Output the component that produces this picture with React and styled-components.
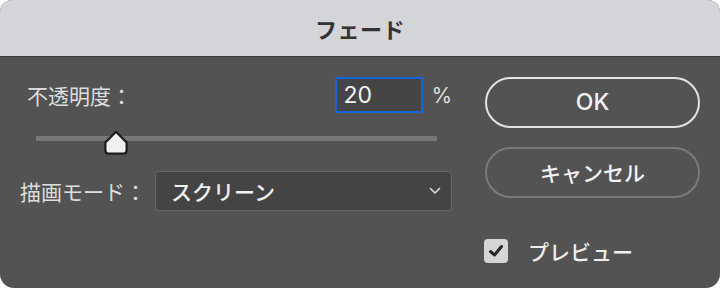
import React, { useState } from 'react';
import styled, { createGlobalStyle } from 'styled-components';

const GlobalStyle = createGlobalStyle`
  html, body {
    margin: 0;
    padding: 0;
    background: #ffffff;
  }
  body {
    font-family: Inter, "Noto Sans CJK JP", sans-serif;
  }
`;

const Window = styled.div`
  width: 720px;
  height: 288px;
  border-radius: 12px 12px 14px 14px;
  overflow: hidden;
  background-color: #535353;
  display: flex;
  flex-direction: column;
`;

const TitleBar = styled.div`
  height: 56px;
  flex-shrink: 0;
  background-color: #d4d5d8;
  border-bottom: 1px solid #3a3a3a;
  display: flex;
  align-items: center;
  justify-content: center;
  font-family: "Noto Sans CJK JP", sans-serif;
  font-size: 22px;
  font-weight: 700;
  color: #333333;
  letter-spacing: 0.5px;
`;

const Body = styled.div`
  flex: 1;
  display: grid;
  grid-template-columns: 432px 215px;
  column-gap: 33px;
  padding: 20px 0 0 20px;
`;

const LeftColumn = styled.div`
  display: flex;
  flex-direction: column;
`;

const OpacityRow = styled.div`
  height: 36px;
  display: flex;
  align-items: center;
  padding-left: 7px;
`;

const Label = styled.span`
  font-family: "Noto Sans CJK JP", sans-serif;
  font-size: 21px;
  color: #dedede;
  white-space: nowrap;
`;

const NumberInput = styled.input`
  margin-left: auto;
  width: 88px;
  height: 36px;
  box-sizing: border-box;
  border: 2px solid #1565d6;
  background-color: #454545;
  color: #f2f2f2;
  font-family: Inter, sans-serif;
  font-size: 23px;
  padding: 0 6px;
  outline: none;
`;

const Unit = styled.span`
  margin-left: 8px;
  font-family: Inter, sans-serif;
  font-size: 21px;
  color: #dedede;
`;

const SliderWrap = styled.div`
  position: relative;
  height: 24px;
  margin: 17px 15px 0 16px;
`;

const Track = styled.div`
  position: absolute;
  left: 0;
  right: 0;
  top: 6px;
  height: 5px;
  background-color: #777777;
`;

const Thumb = styled.svg`
  position: absolute;
  top: 0;
  width: 26px;
  height: 25px;
  margin-left: -13px;
`;

const ModeRow = styled.div`
  margin-top: 17px;
  display: flex;
  align-items: center;
  gap: 9px;
`;

const Select = styled.div`
  flex: 1;
  height: 40px;
  box-sizing: border-box;
  border: 1px solid #686868;
  border-radius: 4px;
  background-color: #444444;
  display: flex;
  align-items: center;
  padding: 0 10px 0 15px;
  font-family: "Noto Sans CJK JP", sans-serif;
  font-size: 21px;
  font-weight: 500;
  color: #f0f0f0;
`;

const SelectText = styled.span`
  flex: 1;
`;

const RightColumn = styled.div`
  display: flex;
  flex-direction: column;
`;

const PillButton = styled.button`
  height: 51px;
  box-sizing: border-box;
  border-radius: 26px;
  border: 2px solid ${(p) => (p.$primary ? '#e4e4e4' : '#7a7a7a')};
  background: transparent;
  color: #f2f2f2;
  font-family: Inter, "Noto Sans CJK JP", sans-serif;
  font-size: ${(p) => (p.$primary ? '23px' : '21px')};
  font-weight: 500;
  margin-bottom: 19px;
  padding: 0;
  padding-bottom: 2px;
  cursor: pointer;
`;

const CheckRow = styled.label`
  margin-top: 19px;
  display: flex;
  align-items: center;
  gap: 20px;
  margin-left: -1px;
`;

const CheckBox = styled.span`
  width: 24px;
  height: 24px;
  border-radius: 4px;
  background-color: #d6d6d6;
  display: flex;
  align-items: center;
  justify-content: center;
`;

const CheckLabel = styled.span`
  font-family: "Noto Sans CJK JP", sans-serif;
  font-size: 21px;
  font-weight: 500;
  color: #eeeeee;
`;

const App = () => {
  const [opacity, setOpacity] = useState('20');

  return (
    <>
      <GlobalStyle />
      <Window>
        <TitleBar>フェード</TitleBar>
        <Body>
          <LeftColumn>
            <OpacityRow>
              <Label>不透明度：</Label>
              <NumberInput value={opacity} onChange={(e) => setOpacity(e.target.value)} />
              <Unit>%</Unit>
            </OpacityRow>
            <SliderWrap>
              <Track />
              <Thumb viewBox="0 0 26 25" style={{ left: `${Number(opacity) || 0}%` }}>
                <path
                  d="M13 1.8 L23.6 12.4 V20.5 Q23.6 23.6 20.5 23.6 H5.5 Q2.4 23.6 2.4 20.5 V12.4 Z"
                  fill="#f0f0f0"
                  stroke="#1e1e1e"
                  strokeWidth="2.2"
                  strokeLinejoin="round"
                />
              </Thumb>
            </SliderWrap>
            <ModeRow>
              <Label>描画モード：</Label>
              <Select>
                <SelectText>スクリーン</SelectText>
                <svg width="12" height="8" viewBox="0 0 12 8">
                  <path d="M1.5 1.5 L6 6 L10.5 1.5" fill="none" stroke="#dddddd" strokeWidth="1.6" strokeLinecap="round" strokeLinejoin="round" />
                </svg>
              </Select>
            </ModeRow>
          </LeftColumn>
          <RightColumn>
            <PillButton $primary>OK</PillButton>
            <PillButton>キャンセル</PillButton>
            <CheckRow>
              <CheckBox>
                <svg width="16" height="14" viewBox="0 0 16 14">
                  <path d="M2.5 7.5 L6.5 11 L13.5 2.5" fill="none" stroke="#262626" strokeWidth="3" strokeLinecap="round" strokeLinejoin="round" />
                </svg>
              </CheckBox>
              <CheckLabel>プレビュー</CheckLabel>
            </CheckRow>
          </RightColumn>
        </Body>
      </Window>
    </>
  );
};

export default App;
